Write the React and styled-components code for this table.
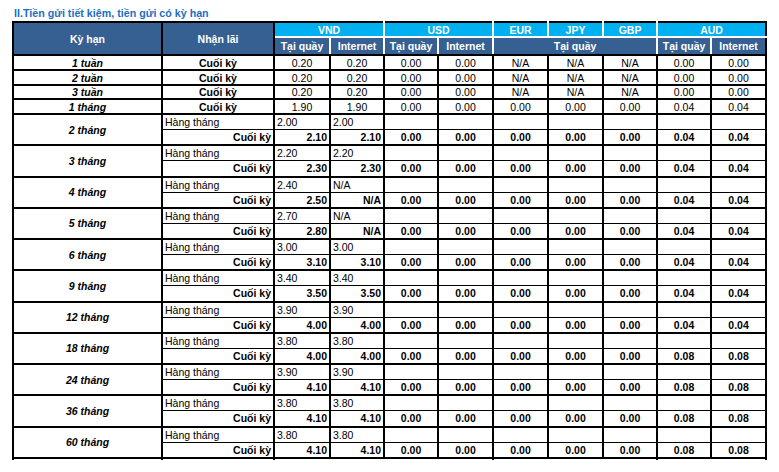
import React from "react";
import styled, { createGlobalStyle } from "styled-components";

const Global = createGlobalStyle`
  html, body { margin: 0; padding: 0; background: #ffffff; }
  body { font-family: "Liberation Sans", Arial, sans-serif; }
`;

const Page = styled.div`
  padding: 7px 0 0 12px;
  width: 779px;
  height: 472px;
  box-sizing: border-box;
  overflow: hidden;
`;

const Title = styled.div`
  font-size: 10.7px;
  line-height: 13px;
  font-weight: bold;
  color: #1b6ec2;
  padding-left: 2px;
  margin-bottom: 1px;
  white-space: nowrap;
`;

const Table = styled.table`
  border-collapse: collapse;
  table-layout: fixed;
  width: 753px;
  font-size: 10.5px;
  color: #000;
`;

const HeadRow = styled.tr`
  height: ${(p) => p.$h}px;
`;

const HeadCell = styled.th`
  padding: 0;
  font-weight: bold;
  color: #fff;
  text-align: center;
  vertical-align: middle;
  line-height: 12px;
  background: ${(p) => (p.$light ? "#00b0f0" : "#366092")};
  border-top: 2px solid ${(p) => (p.$wt ? "#fff" : "#000")};
  border-bottom: 2px solid ${(p) => (p.$wb ? "#fff" : "#000")};
  border-left: 2px solid ${(p) => (p.$wl ? "#fff" : "#000")};
  border-right: 2px solid ${(p) => (p.$wr ? "#fff" : "#000")};
`;

const Row = styled.tr`
  height: ${(p) => p.$h}px;
`;

const Cell = styled.td`
  padding: 0 ${(p) => (p.$align === "right" ? "2px" : "0")} 0
    ${(p) => (p.$align === "left" ? "2px" : "0")};
  text-align: ${(p) => p.$align || "center"};
  font-weight: ${(p) => (p.$bold ? "bold" : "normal")};
  font-style: ${(p) => (p.$italic ? "italic" : "normal")};
  vertical-align: middle;
  line-height: 12px;
  white-space: nowrap;
  overflow: hidden;
  border: 2px solid #000;
  ${(p) => p.$subTop && "border-top-width: 1px;"}
  ${(p) => p.$subBottom && "border-bottom-width: 1px;"}
`;

const StubRow = styled.tr`
  height: 2px;
`;

const StubCell = styled.td`
  padding: 0;
  border-left: 2px solid #000;
  border-right: 2px solid #000;
  border-top: 2px solid #000;
  border-bottom: none;
`;

const colWidths = [149, 112, 56, 54, 54, 55, 55, 55, 54, 54, 55];

const topRows = [
  { term: "1 tuần", vnd: ["0.20", "0.20"], usd: ["0.00", "0.00"], other: ["N/A", "N/A", "N/A"], aud: ["0.00", "0.00"], h: 15 },
  { term: "2 tuần", vnd: ["0.20", "0.20"], usd: ["0.00", "0.00"], other: ["N/A", "N/A", "N/A"], aud: ["0.00", "0.00"], h: 15 },
  { term: "3 tuần", vnd: ["0.20", "0.20"], usd: ["0.00", "0.00"], other: ["N/A", "N/A", "N/A"], aud: ["0.00", "0.00"], h: 14 },
  { term: "1 tháng", vnd: ["1.90", "1.90"], usd: ["0.00", "0.00"], other: ["0.00", "0.00", "0.00"], aud: ["0.04", "0.04"], h: 15 },
];

const blocks = [
  ["2 tháng", "2.00", "2.00", "2.10", "2.10", "0.04"],
  ["3 tháng", "2.20", "2.20", "2.30", "2.30", "0.04"],
  ["4 tháng", "2.40", "N/A", "2.50", "N/A", "0.04"],
  ["5 tháng", "2.70", "N/A", "2.80", "N/A", "0.04"],
  ["6 tháng", "3.00", "3.00", "3.10", "3.10", "0.04"],
  ["9 tháng", "3.40", "3.40", "3.50", "3.50", "0.04"],
  ["12 tháng", "3.90", "3.90", "4.00", "4.00", "0.04"],
  ["18 tháng", "3.80", "3.80", "4.00", "4.00", "0.08"],
  ["24 tháng", "3.90", "3.90", "4.10", "4.10", "0.08"],
  ["36 tháng", "3.80", "3.80", "4.10", "4.10", "0.08"],
  ["60 tháng", "3.80", "3.80", "4.10", "4.10", "0.08"],
];

const SUB = 15.64;

export default function App() {
  return (
    <Page>
      <Global />
      <Title>II.Tiền gửi tiết kiệm, tiền gửi có kỳ hạn</Title>
      <Table>
        <colgroup>
          {colWidths.map((w, i) => (
            <col key={i} style={{ width: w }} />
          ))}
        </colgroup>
        <thead>
          <HeadRow $h={15}>
            <HeadCell rowSpan={2}>Kỳ hạn</HeadCell>
            <HeadCell rowSpan={2}>Nhận lãi</HeadCell>
            <HeadCell colSpan={2} $light $wb $wr>VND</HeadCell>
            <HeadCell colSpan={2} $light $wb $wl $wr>USD</HeadCell>
            <HeadCell $light $wb $wl $wr>EUR</HeadCell>
            <HeadCell $light $wb $wl $wr>JPY</HeadCell>
            <HeadCell $light $wb $wl $wr>GBP</HeadCell>
            <HeadCell colSpan={2} $light $wb $wl>AUD</HeadCell>
          </HeadRow>
          <HeadRow $h={18}>
            <HeadCell $wt $wr>Tại quầy</HeadCell>
            <HeadCell $wt $wl $wr>Internet</HeadCell>
            <HeadCell $wt $wl $wr>Tại quầy</HeadCell>
            <HeadCell $wt $wl $wr>Internet</HeadCell>
            <HeadCell colSpan={3} $wt $wl $wr>Tại quầy</HeadCell>
            <HeadCell $wt $wl $wr>Tại quầy</HeadCell>
            <HeadCell $wt $wl>Internet</HeadCell>
          </HeadRow>
        </thead>
        <tbody>
          {topRows.map((r) => (
            <Row key={r.term} $h={r.h}>
              <Cell $bold $italic>{r.term}</Cell>
              <Cell $bold>Cuối kỳ</Cell>
              <Cell>{r.vnd[0]}</Cell>
              <Cell>{r.vnd[1]}</Cell>
              <Cell>{r.usd[0]}</Cell>
              <Cell>{r.usd[1]}</Cell>
              {r.other.map((v, i) => (
                <Cell key={i}>{v}</Cell>
              ))}
              <Cell>{r.aud[0]}</Cell>
              <Cell>{r.aud[1]}</Cell>
            </Row>
          ))}
          {blocks.map(([term, h1, h2, c1, c2, aud]) => (
            <React.Fragment key={term}>
              <Row $h={SUB}>
                <Cell rowSpan={2} $bold $italic>{term}</Cell>
                <Cell $align="left" $subBottom>Hàng tháng</Cell>
                <Cell $align="left" $subBottom>{h1}</Cell>
                <Cell $align="left" $subBottom>{h2}</Cell>
                {Array.from({ length: 7 }).map((_, i) => (
                  <Cell key={i} $subBottom />
                ))}
              </Row>
              <Row $h={SUB}>
                <Cell $align="right" $bold $subTop>Cuối kỳ</Cell>
                <Cell $align="right" $bold $subTop>{c1}</Cell>
                <Cell $align="right" $bold $subTop>{c2}</Cell>
                {["0.00", "0.00", "0.00", "0.00", "0.00", aud, aud].map((v, i) => (
                  <Cell key={i} $bold $subTop>{v}</Cell>
                ))}
              </Row>
            </React.Fragment>
          ))}
          <StubRow>
            <StubCell />
            <StubCell />
            <StubCell colSpan={4} />
            <StubCell colSpan={3} />
            <StubCell colSpan={2} />
          </StubRow>
        </tbody>
      </Table>
    </Page>
  );
}
